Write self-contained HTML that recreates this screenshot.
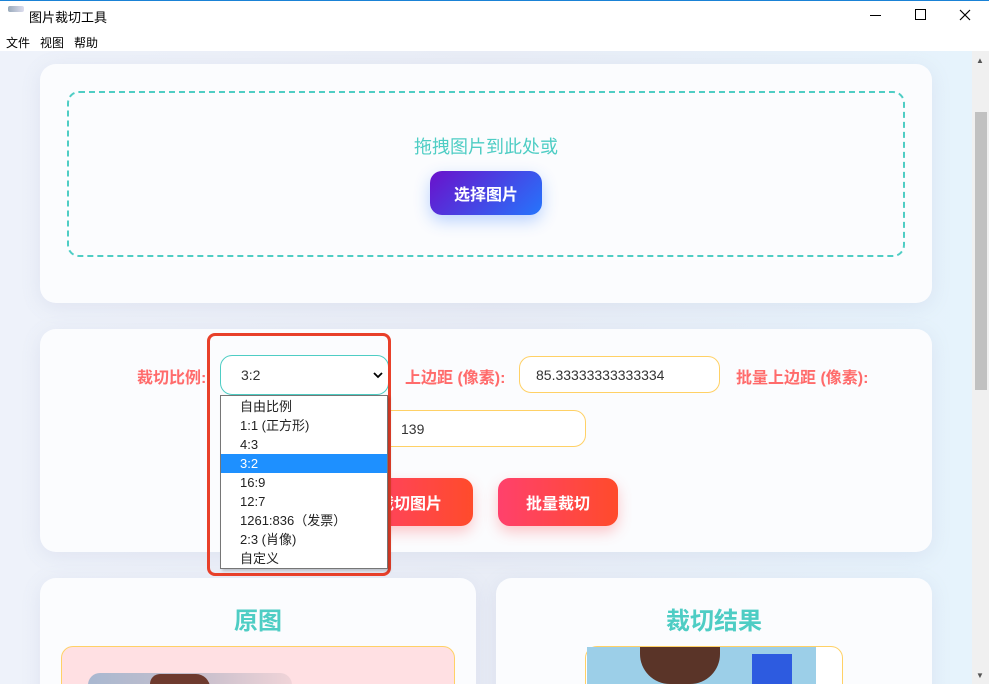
<!DOCTYPE html>
<html><head><meta charset="utf-8"><style>
*{box-sizing:border-box;margin:0;padding:0}
html,body{width:989px;height:684px;overflow:hidden}
body{font-family:"Liberation Sans","Microsoft YaHei","Noto Sans CJK SC",sans-serif;background:#fff;position:relative}
.abs{position:absolute}
.cjk{font-family:"Liberation Sans","Noto Sans CJK SC",sans-serif}
.content{left:0;top:51px;width:972px;height:633px;background:linear-gradient(90deg,#eef2fa,#e9edf6 50%,#e6f3fc);overflow:hidden}
.card{background:#fbfcfe;border-radius:16px;box-shadow:0 4px 20px rgba(120,130,180,.12)}
.lbl{color:#ff6b6b;font-weight:bold;font-size:16px}
.inp{background:#fff;border:1px solid #ffd166;border-radius:12px;font-size:14px;color:#333;padding-left:16px;display:flex;align-items:center}
.btnr{background:linear-gradient(90deg,#ff416c,#ff4b2b);border-radius:12px;color:#fff;font-weight:bold;font-size:16px;display:flex;align-items:center;justify-content:center;box-shadow:0 6px 14px rgba(255,75,80,.3)}
.opt{height:19px;line-height:19px;padding-left:19px;font-size:13px;color:#222}
</style></head><body>
<div class="abs" style="left:0;top:0;width:989px;height:1px;background:#1a82d6"></div>
<div class="abs" style="left:8px;top:6px;width:16px;height:6px;background:linear-gradient(90deg,#9ab,#dde);border-radius:2px"></div>
<div class="abs cjk" style="left:29px;top:7px;font-size:13px;color:#000">图片裁切工具</div>
<div class="abs" style="left:870px;top:15px;width:11px;height:1px;background:#000"></div>
<div class="abs" style="left:915px;top:9px;width:11px;height:11px;border:1px solid #000"></div>
<svg class="abs" style="left:959px;top:9px" width="12" height="12"><path d="M1 1L11 11M11 1L1 11" stroke="#000" stroke-width="1.2"/></svg>
<div class="abs cjk" style="left:6px;top:34px;font-size:12px;color:#000">文件&nbsp;&nbsp;&nbsp;视图&nbsp;&nbsp;&nbsp;帮助</div>

<div class="abs content">
 <div class="abs card" style="left:40px;top:13px;width:892px;height:239px"></div>
 <div class="abs" style="left:67px;top:40px;width:838px;height:166px;border:2px dashed #4ecdc4;border-radius:12px"></div>
 <div class="abs cjk" style="left:0;top:82px;width:972px;text-align:center;font-size:18px;color:#4ecdc4">拖拽图片到此处或</div>
 <div class="abs cjk" style="left:430px;top:120px;width:112px;height:44px;border-radius:12px;background:linear-gradient(135deg,#6a11cb,#2575fc);color:#fff;font-weight:bold;font-size:16px;display:flex;align-items:center;justify-content:center;box-shadow:0 6px 16px rgba(37,117,252,.3)">选择图片</div>

 <div class="abs card" style="left:40px;top:278px;width:892px;height:223px"></div>
 <div class="abs lbl cjk" style="left:137px;top:313px">裁切比例:</div>
 <div class="abs" style="left:220px;top:304px;width:169px;height:40px;border:1px solid #4ecdc4;border-radius:12px;background:#fff;font-size:14px;color:#333;padding-left:20px;line-height:38px">3:2<svg style="position:absolute;right:5px;top:15px" width="10" height="8"><path d="M1 2L5 6L9 2" stroke="#000" stroke-width="1.8" fill="none"/></svg></div>
 <div class="abs lbl cjk" style="left:405px;top:313px">上边距 (像素):</div>
 <div class="abs inp" style="left:519px;top:305px;width:201px;height:37px">85.33333333333334</div>
 <div class="abs lbl cjk" style="left:736px;top:313px">批量上边距 (像素):</div>
 <div class="abs inp" style="left:300px;top:359px;width:286px;height:37px;padding-left:100px">139</div>
 <div class="abs btnr cjk" style="left:347px;top:427px;width:126px;height:48px">裁切图片</div>
 <div class="abs btnr cjk" style="left:498px;top:427px;width:120px;height:48px">批量裁切</div>

 <div class="abs card" style="left:40px;top:527px;width:436px;height:160px"></div>
 <div class="abs card" style="left:496px;top:527px;width:436px;height:160px"></div>
 <div class="abs cjk" style="left:40px;top:550px;width:436px;text-align:center;font-size:24px;font-weight:bold;color:#4ecdc4">原图</div>
 <div class="abs cjk" style="left:496px;top:550px;width:436px;text-align:center;font-size:24px;font-weight:bold;color:#4ecdc4">裁切结果</div>
 <div class="abs" style="left:61px;top:595px;width:394px;height:60px;background:#ffe0e3;border:1px solid #ffd166;border-radius:12px"></div>
 <div class="abs" style="left:88px;top:622px;width:204px;height:20px;background:linear-gradient(90deg,#a9b8d0,#c8bfcc 55%,#f0d4d8);border-radius:12px 12px 0 0"></div>
 <div class="abs" style="left:150px;top:623px;width:60px;height:19px;background:#6e3a2e;border-radius:10px 14px 0 0"></div>
 <div class="abs" style="left:585px;top:595px;width:258px;height:60px;background:#fff;border:1px solid #ffd166;border-radius:12px"></div>
 <div class="abs" style="left:587px;top:596px;width:229px;height:37px;background:#9ccfe8"></div>
 <div class="abs" style="left:640px;top:596px;width:80px;height:37px;background:#5a3428;border-radius:0 0 30px 30px"></div>
 <div class="abs" style="left:752px;top:603px;width:40px;height:30px;background:#2d5be0"></div>
</div>

<div class="abs" style="left:972px;top:51px;width:17px;height:633px;background:#f0f0f0"></div>
<div class="abs" style="left:975px;top:112px;width:12px;height:278px;background:#c1c1c1"></div>
<div class="abs" style="left:976px;top:56px;font-size:8px;color:#555">▲</div>
<div class="abs" style="left:976px;top:671px;font-size:8px;color:#555">▼</div>

<div class="abs" style="left:207px;top:333px;width:184px;height:243px;border:3px solid #e8402a;border-radius:8px"></div>
<div class="abs cjk" style="left:220px;top:395px;width:168px;height:174px;background:#fff;border:1px solid #767676;box-shadow:2px 2px 3px rgba(0,0,0,.2);padding-top:1px;overflow:hidden">
 <div class="opt">自由比例</div><div class="opt">1:1 (正方形)</div><div class="opt">4:3</div>
 <div class="opt" style="background:#1e90ff;color:#fff">3:2</div>
 <div class="opt">16:9</div><div class="opt">12:7</div><div class="opt">1261:836（发票）</div><div class="opt">2:3 (肖像)</div><div class="opt">自定义</div>
</div>
</body></html>
